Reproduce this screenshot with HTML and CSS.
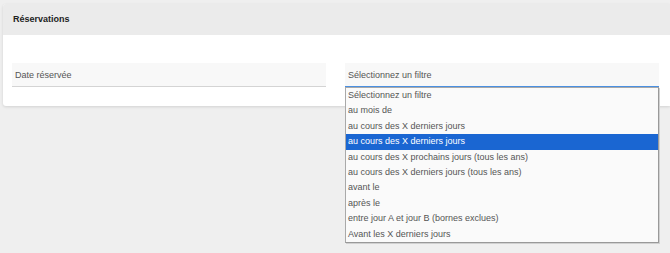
FILE: index.html
```html
<!DOCTYPE html>
<html>

<head>
    <meta name="viewport" content="width=device-width, initial-scale=1.0">
    <link rel="stylesheet" href="styles.css">
    <title>Réservations</title>
</head>

<body>
    <div class="card">
        <div class="card-header">Réservations</div>
        <div class="card-body">
            <div class="filtres">
                <div class="champ">Date réservée</div>
                <div class="champ champ-actif">
                    Sélectionnez un filtre
                    <ul class="liste">
                        <li>Sélectionnez un filtre</li>
                        <li>au mois de</li>
                        <li>au cours des X derniers jours</li>
                        <li class="choisi">au cours des X derniers jours</li>
                        <li>au cours des X prochains jours (tous les ans)</li>
                        <li>au cours des X derniers jours (tous les ans)</li>
                        <li>avant le</li>
                        <li>après le</li>
                        <li>entre jour A et jour B (bornes exclues)</li>
                        <li>Avant les X derniers jours</li>
                    </ul>
                </div>
            </div>
        </div>
    </div>
</body>

</html>
```

FILE: styles.css
```css
html {
    height: 100%;
}

body {
    font-family: "Liberation Sans", Arial, sans-serif;
    font-size: 9px;
    background-color: #efefef;
    margin: 0;
    padding: 4px 0 0 3px;
    min-height: 100%;
    box-sizing: border-box;
}

.card {
    background-color: #fff;
    border-radius: 3px 0 0 3px;
    box-shadow: 0 1px 3px rgba(0, 0, 0, 0.12);
}

.card-header {
    background-color: #ebebeb;
    height: 31px;
    line-height: 30px;
    padding-left: 10px;
    font-weight: bold;
    color: #222;
    border-radius: 3px 0 0 0;
}

.card-body {
    padding: 28px 0 19px 9px;
}

.filtres {
    display: grid;
    grid-template-columns: 314px 314px;
    gap: 19px;
}

.champ {
    position: relative;
    z-index: 1;
    height: 23px;
    line-height: 24px;
    padding-left: 3px;
    background-color: #f8f8f8;
    border-bottom: 1px solid #d4d4d4;
    color: #555;
}

.champ-actif {
    border-bottom: 1px solid #4a90e2;
}

.liste {
    position: absolute;
    top: 24px;
    left: 0;
    width: 312px;
    margin: 0;
    padding: 0;
    list-style: none;
    background-color: #fafafa;
    border: 1px solid #a9a9a9;
    border-right-color: #999;
    border-bottom-color: #999;
    box-shadow: 1px 1px 0 #d0d0d0;
}

.liste li {
    height: 15.4px;
    line-height: 15.4px;
    padding-left: 2px;
    color: #555;
}

.liste li.choisi {
    background-color: #1a66d2;
    color: #fff;
}
```
